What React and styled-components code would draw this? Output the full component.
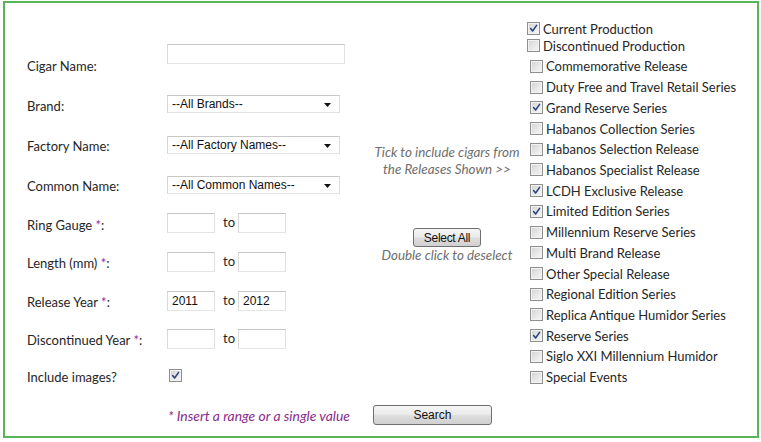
import styled, { createGlobalStyle } from "styled-components";

const GlobalStyle = createGlobalStyle`
  html, body {
    margin: 0;
    padding: 0;
    background: #ffffff;
    overflow: hidden;
  }
`;

const fields = [
  { label: "Cigar Name:", kind: "text" },
  { label: "Brand:", kind: "select", value: "--All Brands--" },
  { label: "Factory Name:", kind: "select", value: "--All Factory Names--" },
  { label: "Common Name:", kind: "select", value: "--All Common Names--" },
  { label: "Ring Gauge", star: true, kind: "range", from: "", to: "" },
  { label: "Length (mm)", star: true, kind: "range", from: "", to: "" },
  { label: "Release Year", star: true, kind: "range", from: "2011", to: "2012" },
  { label: "Discontinued Year", star: true, kind: "range", from: "", to: "" },
  { label: "Include images?", kind: "check", checked: true },
];

const production = [
  { name: "Current Production", checked: true },
  { name: "Discontinued Production", checked: false },
];

const releases = [
  { name: "Commemorative Release", checked: false },
  { name: "Duty Free and Travel Retail Series", checked: false },
  { name: "Grand Reserve Series", checked: true },
  { name: "Habanos Collection Series", checked: false },
  { name: "Habanos Selection Release", checked: false },
  { name: "Habanos Specialist Release", checked: false },
  { name: "LCDH Exclusive Release", checked: true },
  { name: "Limited Edition Series", checked: true },
  { name: "Millennium Reserve Series", checked: false },
  { name: "Multi Brand Release", checked: false },
  { name: "Other Special Release", checked: false },
  { name: "Regional Edition Series", checked: false },
  { name: "Replica Antique Humidor Series", checked: false },
  { name: "Reserve Series", checked: true },
  { name: "Siglo XXI Millennium Humidor", checked: false },
  { name: "Special Events", checked: false },
];

const Check = ({ checked }) => (
  <Box>
    {checked && (
      <svg width="9" height="9" viewBox="0 0 9 9">
        <path
          d="M1.6 4.6 L3.6 7 L7.6 1.4"
          fill="none"
          stroke="#25407a"
          strokeWidth="1.5"
          strokeLinecap="round"
          strokeLinejoin="round"
        />
      </svg>
    )}
  </Box>
);

const Field = ({ field }) => {
  if (field.kind === "text") return <TextInput type="text" $w={178} defaultValue="" />;
  if (field.kind === "select")
    return (
      <SelectWrap>
        <Select defaultValue={field.value}>
          <option>{field.value}</option>
        </Select>
        <Arrow width="7" height="4" viewBox="0 0 7 4">
          <path d="M0 0 H7 L3.5 4 Z" fill="#111" />
        </Arrow>
      </SelectWrap>
    );
  if (field.kind === "range")
    return (
      <Range>
        <TextInput type="text" $w={48} defaultValue={field.from} />
        <To>to</To>
        <TextInput type="text" $w={48} defaultValue={field.to} />
      </Range>
    );
  return (
    <CheckCell>
      <Check checked={field.checked} />
    </CheckCell>
  );
};

export default function App() {
  return (
    <>
      <GlobalStyle />
      <Frame>
        <Main>
          <Fields>
            {fields.map((f) => (
              <Row key={f.label}>
                <Label>
                  {f.label}
                  {f.star && (
                    <>
                      {" "}
                      <Star>*</Star>
                    </>
                  )}
                  {f.star && ":"}
                </Label>
                <Field field={f} />
              </Row>
            ))}
          </Fields>

          <Middle>
            <Hint>
              Tick to include cigars from
              <br />
              the Releases Shown &gt;&gt;
            </Hint>
            <SmallButton type="button">Select All</SmallButton>
            <Hint>Double click to deselect</Hint>
          </Middle>

          <Releases>
            <Group>
              {production.map((r) => (
                <Item key={r.name} $h={17}>
                  <Check checked={r.checked} />
                  <span>{r.name}</span>
                </Item>
              ))}
            </Group>
            <Group $indent>
              {releases.map((r) => (
                <Item key={r.name} $h={20.73}>
                  <Check checked={r.checked} />
                  <span>{r.name}</span>
                </Item>
              ))}
            </Group>
          </Releases>
        </Main>

        <Footer>
          <Note>* Insert a range or a single value</Note>
          <SearchButton type="button">Search</SearchButton>
        </Footer>
      </Frame>
    </>
  );
}

const Frame = styled.div`
  box-sizing: border-box;
  margin: 1px 0 0 3px;
  width: 756px;
  height: 437px;
  border: 2px solid #5ab55a;
  font-family: Lato, "Open Sans", sans-serif;
  font-size: 13px;
  color: #262626;
`;

const Main = styled.div`
  display: flex;
  align-items: flex-start;
`;

const Fields = styled.div`
  width: 362px;
  box-sizing: border-box;
  padding: 41px 0 0 22px;
  display: grid;
  grid-template-columns: 140px 1fr;
  grid-template-rows: 40px 40px 41px 39px 38px 39px 39px 37px 36px;
`;

const Row = styled.div`
  display: contents;
`;

const Label = styled.div`
  display: flex;
  align-items: center;
  padding-top: 3px;
  white-space: pre;
`;

const Star = styled.span`
  color: #a0289e;
`;

const TextInput = styled.input`
  box-sizing: border-box;
  width: ${({ $w }) => $w}px;
  height: 20px;
  margin: 0;
  padding: 0 4px;
  border: 1px solid;
  border-color: #c4c4c4 #e0e0e0 #e4e4e4 #dadada;
  font-family: "Liberation Sans", Arial, sans-serif;
  font-size: 12px;
  color: #111;
  background: #fff;
  outline: none;
`;

const SelectWrap = styled.div`
  position: relative;
  align-self: center;
  width: 173px;
  height: 18px;
`;

const Select = styled.select`
  appearance: none;
  box-sizing: border-box;
  width: 100%;
  height: 100%;
  margin: 0;
  padding: 0 0 0 4px;
  border: 1px solid;
  border-color: #c8c8c8 #dcdcdc #e2e2e2 #d6d6d6;
  border-radius: 0;
  background: #fff;
  font-family: "Liberation Sans", Arial, sans-serif;
  font-size: 12px;
  color: #111;
  outline: none;
`;

const Arrow = styled.svg`
  position: absolute;
  right: 9px;
  top: 8px;
`;

const Range = styled.div`
  display: flex;
  align-items: center;
  align-self: center;
`;

const To = styled.span`
  width: 15px;
  margin-left: 8px;
  padding-bottom: 2px;
`;

const CheckCell = styled.div`
  display: flex;
  align-items: center;
  padding-left: 2px;
`;

const Box = styled.span`
  box-sizing: border-box;
  flex: none;
  width: 13px;
  height: 13px;
  display: inline-flex;
  align-items: center;
  justify-content: center;
  border: 1px solid #8e8f8f;
  background: linear-gradient(135deg, #d2d2d2 0%, #e8e8e8 55%, #f7f7f7 100%);
  box-shadow: inset 0 0 0 1px #f2f2f2;
`;

const Middle = styled.div`
  width: 160px;
  padding-top: 141px;
  display: flex;
  flex-direction: column;
  align-items: center;
`;

const Hint = styled.p`
  margin: 0;
  font-style: italic;
  font-size: 13.4px;
  line-height: 17px;
  color: #6e6e6e;
  text-align: center;
  white-space: nowrap;

  & + button {
    margin-top: 50px;
  }
`;

const buttonBase = `
  box-sizing: border-box;
  margin: 0;
  padding: 0;
  border: 1px solid #707070;
  border-radius: 3px;
  background: linear-gradient(#f6f6f6 0%, #ebebeb 45%, #dddddd 55%, #d0d0d0 100%);
  font-family: "Liberation Sans", Arial, sans-serif;
  font-size: 12px;
  color: #111;
`;

const SmallButton = styled.button`
  ${buttonBase}
  width: 68px;
  height: 19px;
  letter-spacing: -0.3px;
`;

const Releases = styled.div`
  padding-top: 17px;
`;

const Group = styled.div`
  margin-left: ${({ $indent }) => ($indent ? "3px" : "0")};
  margin-top: ${({ $indent }) => ($indent ? "2px" : "0")};
`;

const Item = styled.label`
  display: flex;
  align-items: center;
  gap: 3px;
  height: ${({ $h }) => $h}px;
  white-space: nowrap;
`;

const Footer = styled.div`
  display: flex;
  align-items: center;
  gap: 23px;
  margin-top: 12px;
  padding-left: 163px;
`;

const Note = styled.span`
  font-style: italic;
  font-size: 13.9px;
  color: #8b2a8b;
`;

const SearchButton = styled.button`
  ${buttonBase}
  width: 119px;
  height: 20px;
`;
